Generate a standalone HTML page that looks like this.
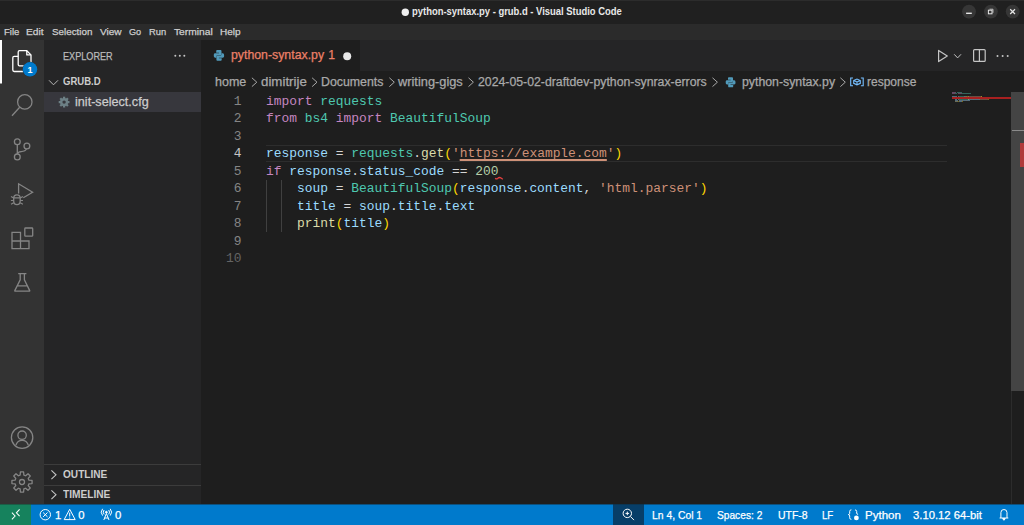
<!DOCTYPE html>
<html><head><meta charset="utf-8">
<style>
*{margin:0;padding:0;box-sizing:border-box}
html,body{width:1024px;height:525px;overflow:hidden;background:#1e1e1e;font-family:"Liberation Sans",sans-serif;position:relative}
.a{position:absolute}
.t{white-space:pre;transform-origin:0 50%;-webkit-text-stroke:0.25px currentColor}
.code{font-family:"Liberation Mono",monospace;font-size:12.917px;line-height:17.5px;white-space:pre;color:#d4d4d4}
#title{left:0;top:0;width:1024px;height:23.5px;background:#202020;border-top:1px solid #2c2c2c}
#menu{left:0;top:23.5px;width:1024px;height:16.5px;background:#2b2b2b}
#act{left:0;top:40px;width:44px;height:464px;background:#333333}
#side{left:44px;top:40px;width:157px;height:464px;background:#252526}
#tabs{left:201px;top:40px;width:823px;height:31px;background:#252526}
#tab{left:201px;top:40px;width:159px;height:31px;background:#1e1e1e}
#status{left:0;top:505px;width:1024px;height:20px;background:#007acc}
#statusb{left:0;top:504px;width:1024px;height:1px;background:rgba(0,122,204,.55)}
#remote{left:0;top:504px;width:31px;height:21px;background:#16825d;border-top:1px solid #1a5e46}
#zoomb{left:612.8px;top:504px;width:31px;height:21px;background:#073e68;border-top:1px solid #0b3552}
#sel{left:44px;top:92px;width:157px;height:20px;background:#37373d}
#curline{left:266px;top:144.5px;width:681px;height:17px;border-top:1.2px solid #2d2d2d;border-bottom:1.2px solid #2d2d2d}
.guide{width:1px;background:#404040}
svg{position:absolute;left:0;top:0}
</style></head><body>
<div id="title" class="a"></div>
<div id="menu" class="a"></div>
<div id="act" class="a"></div>
<div id="side" class="a"></div>
<div id="tabs" class="a"></div>
<div id="tab" class="a"></div>
<div id="sel" class="a"></div>
<div id="status" class="a"></div>
<div id="statusb" class="a"></div>
<div id="remote" class="a"></div>
<div id="zoomb" class="a"></div>
<div id="curline" class="a"></div>
<div class="a guide" style="left:266px;top:179.5px;height:52.5px"></div>
<div class="a guide" style="left:281px;top:179.5px;height:52.5px"></div>
<div class="a" style="left:44px;top:464px;width:157px;height:1px;background:#3c3c3c"></div>
<div class="a" style="left:44px;top:484.5px;width:157px;height:1px;background:#3c3c3c"></div>
<!-- scrollbar -->
<div class="a" style="left:1011px;top:92px;width:1px;height:412px;background:#2c2c2c"></div>
<div class="a" style="left:1011px;top:92px;width:13px;height:299px;background:#444444"></div>
<div class="a" style="left:1012px;top:129.5px;width:12px;height:1.5px;background:#8a8a8a"></div>
<div class="a" style="left:1020px;top:143px;width:4px;height:24px;background:#b03a3a"></div>
<!-- minimap -->
<div class="a" style="left:952.00px;top:92.00px;width:3.90px;height:1px;background:#c586c0;opacity:.42"></div>
<div class="a" style="left:956.55px;top:92.00px;width:5.20px;height:1px;background:#4ec9b0;opacity:.42"></div>
<div class="a" style="left:952.00px;top:93.34px;width:2.60px;height:1px;background:#c586c0;opacity:.42"></div>
<div class="a" style="left:955.25px;top:93.34px;width:1.95px;height:1px;background:#4ec9b0;opacity:.42"></div>
<div class="a" style="left:957.85px;top:93.34px;width:3.90px;height:1px;background:#c586c0;opacity:.42"></div>
<div class="a" style="left:962.40px;top:93.34px;width:8.45px;height:1px;background:#4ec9b0;opacity:.42"></div>
<div class="a" style="left:952.00px;top:96.02px;width:5.20px;height:1px;background:#9cdcfe;opacity:.42"></div>
<div class="a" style="left:957.85px;top:96.02px;width:0.65px;height:1px;background:#d4d4d4;opacity:.42"></div>
<div class="a" style="left:959.15px;top:96.02px;width:5.20px;height:1px;background:#4ec9b0;opacity:.42"></div>
<div class="a" style="left:964.35px;top:96.02px;width:0.65px;height:1px;background:#d4d4d4;opacity:.42"></div>
<div class="a" style="left:965.00px;top:96.02px;width:1.95px;height:1px;background:#dcdcaa;opacity:.42"></div>
<div class="a" style="left:966.95px;top:96.02px;width:0.65px;height:1px;background:#ffd700;opacity:.42"></div>
<div class="a" style="left:967.60px;top:96.02px;width:0.65px;height:1px;background:#ce9178;opacity:.42"></div>
<div class="a" style="left:968.25px;top:96.02px;width:12.35px;height:1px;background:#ce9178;opacity:.42"></div>
<div class="a" style="left:980.60px;top:96.02px;width:0.65px;height:1px;background:#ce9178;opacity:.42"></div>
<div class="a" style="left:981.25px;top:96.02px;width:0.65px;height:1px;background:#ffd700;opacity:.42"></div>
<div class="a" style="left:952.00px;top:97.36px;width:1.30px;height:1px;background:#c586c0;opacity:.42"></div>
<div class="a" style="left:953.95px;top:97.36px;width:5.20px;height:1px;background:#9cdcfe;opacity:.42"></div>
<div class="a" style="left:959.15px;top:97.36px;width:0.65px;height:1px;background:#d4d4d4;opacity:.42"></div>
<div class="a" style="left:959.80px;top:97.36px;width:7.15px;height:1px;background:#9cdcfe;opacity:.42"></div>
<div class="a" style="left:967.60px;top:97.36px;width:1.30px;height:1px;background:#d4d4d4;opacity:.42"></div>
<div class="a" style="left:969.55px;top:97.36px;width:1.95px;height:1px;background:#b5cea8;opacity:.42"></div>
<div class="a" style="left:954.60px;top:98.70px;width:2.60px;height:1px;background:#9cdcfe;opacity:.42"></div>
<div class="a" style="left:957.85px;top:98.70px;width:0.65px;height:1px;background:#d4d4d4;opacity:.42"></div>
<div class="a" style="left:959.15px;top:98.70px;width:8.45px;height:1px;background:#4ec9b0;opacity:.42"></div>
<div class="a" style="left:967.60px;top:98.70px;width:0.65px;height:1px;background:#ffd700;opacity:.42"></div>
<div class="a" style="left:968.25px;top:98.70px;width:5.20px;height:1px;background:#9cdcfe;opacity:.42"></div>
<div class="a" style="left:973.45px;top:98.70px;width:0.65px;height:1px;background:#d4d4d4;opacity:.42"></div>
<div class="a" style="left:974.10px;top:98.70px;width:4.55px;height:1px;background:#9cdcfe;opacity:.42"></div>
<div class="a" style="left:978.65px;top:98.70px;width:0.65px;height:1px;background:#d4d4d4;opacity:.42"></div>
<div class="a" style="left:979.95px;top:98.70px;width:8.45px;height:1px;background:#ce9178;opacity:.42"></div>
<div class="a" style="left:988.40px;top:98.70px;width:0.65px;height:1px;background:#ffd700;opacity:.42"></div>
<div class="a" style="left:954.60px;top:100.04px;width:3.25px;height:1px;background:#9cdcfe;opacity:.42"></div>
<div class="a" style="left:958.50px;top:100.04px;width:0.65px;height:1px;background:#d4d4d4;opacity:.42"></div>
<div class="a" style="left:959.80px;top:100.04px;width:2.60px;height:1px;background:#9cdcfe;opacity:.42"></div>
<div class="a" style="left:962.40px;top:100.04px;width:0.65px;height:1px;background:#d4d4d4;opacity:.42"></div>
<div class="a" style="left:963.05px;top:100.04px;width:3.25px;height:1px;background:#9cdcfe;opacity:.42"></div>
<div class="a" style="left:966.30px;top:100.04px;width:0.65px;height:1px;background:#d4d4d4;opacity:.42"></div>
<div class="a" style="left:966.95px;top:100.04px;width:2.60px;height:1px;background:#9cdcfe;opacity:.42"></div>
<div class="a" style="left:954.60px;top:101.38px;width:3.25px;height:1px;background:#dcdcaa;opacity:.42"></div>
<div class="a" style="left:957.85px;top:101.38px;width:0.65px;height:1px;background:#ffd700;opacity:.42"></div>
<div class="a" style="left:958.50px;top:101.38px;width:3.25px;height:1px;background:#9cdcfe;opacity:.42"></div>
<div class="a" style="left:961.75px;top:101.38px;width:0.65px;height:1px;background:#ffd700;opacity:.42"></div>
<div class="a" style="left:952px;top:96.9px;width:59px;height:2px;background:#a82020"></div>
<div class="a t" style="left:411.92px;top:6.84px;font-size:10px;line-height:10px;font-weight:700;color:#e8e8e8;transform:scaleX(0.9423);-webkit-text-stroke:0">python-syntax.py - grub.d - Visual Studio Code</div>
<div class="a t" style="left:3.82px;top:26.87px;font-size:9.6px;line-height:9.6px;font-weight:400;color:#cfcfcf;transform:scaleX(0.9937)">File</div>
<div class="a t" style="left:26.49px;top:26.87px;font-size:9.6px;line-height:9.6px;font-weight:400;color:#cfcfcf;transform:scaleX(1.0647)">Edit</div>
<div class="a t" style="left:51.61px;top:26.87px;font-size:9.6px;line-height:9.6px;font-weight:400;color:#cfcfcf;transform:scaleX(1.0227)">Selection</div>
<div class="a t" style="left:99.60px;top:26.87px;font-size:9.6px;line-height:9.6px;font-weight:400;color:#cfcfcf;transform:scaleX(1.0469)">View</div>
<div class="a t" style="left:129.04px;top:26.87px;font-size:9.6px;line-height:9.6px;font-weight:400;color:#cfcfcf;transform:scaleX(0.9484)">Go</div>
<div class="a t" style="left:149.03px;top:26.87px;font-size:9.6px;line-height:9.6px;font-weight:400;color:#cfcfcf;transform:scaleX(0.9744)">Run</div>
<div class="a t" style="left:173.89px;top:26.87px;font-size:9.6px;line-height:9.6px;font-weight:400;color:#cfcfcf;transform:scaleX(1.0672)">Terminal</div>
<div class="a t" style="left:219.80px;top:26.87px;font-size:9.6px;line-height:9.6px;font-weight:400;color:#cfcfcf;transform:scaleX(1.0434)">Help</div>
<div class="a t" style="left:62.74px;top:51.09px;font-size:11px;line-height:11px;font-weight:400;color:#bbbbbb;transform:scaleX(0.8287)">EXPLORER</div>
<div class="a t" style="left:62.72px;top:75.86px;font-size:10.8px;line-height:10.8px;font-weight:700;color:#cccccc;transform:scaleX(0.8844);-webkit-text-stroke:0">GRUB.D</div>
<div class="a t" style="left:75.09px;top:95.60px;font-size:12.4px;line-height:12.4px;font-weight:400;color:#cccccc;transform:scaleX(1.0193)">init-select.cfg</div>
<div class="a t" style="left:230.71px;top:49.27px;font-size:12.2px;line-height:12.2px;font-weight:400;color:#ec8068;transform:scaleX(1.0099)">python-syntax.py</div>
<div class="a t" style="left:328.31px;top:49.27px;font-size:12.2px;line-height:12.2px;font-weight:400;color:#ec8068;transform:scaleX(1.0000)">1</div>
<div class="a t" style="left:215.10px;top:75.54px;font-size:12px;line-height:12px;font-weight:400;color:#a9a9a9;transform:scaleX(1.0410)">home</div>
<div class="a t" style="left:260.97px;top:75.54px;font-size:12px;line-height:12px;font-weight:400;color:#a9a9a9;transform:scaleX(1.1079)">dimitrije</div>
<div class="a t" style="left:321.21px;top:75.54px;font-size:12px;line-height:12px;font-weight:400;color:#a9a9a9;transform:scaleX(1.0288)">Documents</div>
<div class="a t" style="left:398.19px;top:75.54px;font-size:12px;line-height:12px;font-weight:400;color:#a9a9a9;transform:scaleX(1.0673)">writing-gigs</div>
<div class="a t" style="left:477.81px;top:75.54px;font-size:12px;line-height:12px;font-weight:400;color:#a9a9a9;transform:scaleX(1.0237)">2024-05-02-draftdev-python-synrax-errors</div>
<div class="a t" style="left:741.81px;top:75.54px;font-size:12px;line-height:12px;font-weight:400;color:#a9a9a9;transform:scaleX(1.0256)">python-syntax.py</div>
<div class="a t" style="left:867.32px;top:75.54px;font-size:12px;line-height:12px;font-weight:400;color:#a9a9a9;transform:scaleX(0.9990)">response</div>
<div class="a t" style="left:62.60px;top:469.06px;font-size:10.8px;line-height:10.8px;font-weight:700;color:#cccccc;transform:scaleX(0.9347);-webkit-text-stroke:0">OUTLINE</div>
<div class="a t" style="left:62.59px;top:489.26px;font-size:10.8px;line-height:10.8px;font-weight:700;color:#cccccc;transform:scaleX(0.9387);-webkit-text-stroke:0">TIMELINE</div>
<div class="a t" style="left:54.95px;top:509.73px;font-size:11.3px;line-height:11.3px;font-weight:400;color:#ffffff;transform:scaleX(1.0000)">1</div>
<div class="a t" style="left:78.25px;top:509.73px;font-size:11.3px;line-height:11.3px;font-weight:400;color:#ffffff;transform:scaleX(1.0000)">0</div>
<div class="a t" style="left:115.05px;top:509.73px;font-size:11.3px;line-height:11.3px;font-weight:400;color:#ffffff;transform:scaleX(1.0000)">0</div>
<div class="a t" style="left:651.59px;top:509.73px;font-size:11.3px;line-height:11.3px;font-weight:400;color:#ffffff;transform:scaleX(0.9171)">Ln 4, Col 1</div>
<div class="a t" style="left:717.29px;top:509.73px;font-size:11.3px;line-height:11.3px;font-weight:400;color:#ffffff;transform:scaleX(0.9016)">Spaces: 2</div>
<div class="a t" style="left:777.58px;top:509.73px;font-size:11.3px;line-height:11.3px;font-weight:400;color:#ffffff;transform:scaleX(0.9254)">UTF-8</div>
<div class="a t" style="left:822.01px;top:509.73px;font-size:11.3px;line-height:11.3px;font-weight:400;color:#ffffff;transform:scaleX(0.8554)">LF</div>
<div class="a t" style="left:864.54px;top:509.73px;font-size:11.3px;line-height:11.3px;font-weight:400;color:#ffffff;transform:scaleX(1.0202)">Python</div>
<div class="a t" style="left:913.45px;top:509.73px;font-size:11.3px;line-height:11.3px;font-weight:400;color:#ffffff;transform:scaleX(0.9981)">3.10.12 64-bit</div>
<div class="a code" style="left:233.75px;top:92.9px;color:#858585">1</div>
<div class="a code" style="left:266px;top:92.9px"><span style="color:#c586c0">import</span><span style="color:#d4d4d4"> </span><span style="color:#4ec9b0">requests</span></div>
<div class="a code" style="left:233.75px;top:110.4px;color:#858585">2</div>
<div class="a code" style="left:266px;top:110.4px"><span style="color:#c586c0">from</span><span style="color:#d4d4d4"> </span><span style="color:#4ec9b0">bs4</span><span style="color:#d4d4d4"> </span><span style="color:#c586c0">import</span><span style="color:#d4d4d4"> </span><span style="color:#4ec9b0">BeautifulSoup</span></div>
<div class="a code" style="left:233.75px;top:127.9px;color:#858585">3</div>
<div class="a code" style="left:233.75px;top:145.4px;color:#c6c6c6">4</div>
<div class="a code" style="left:266px;top:145.4px"><span style="color:#9cdcfe">response</span><span style="color:#d4d4d4"> = </span><span style="color:#4ec9b0">requests</span><span style="color:#d4d4d4">.</span><span style="color:#dcdcaa">get</span><span style="color:#ffd700">(</span><span style="color:#ce9178">'</span><span style="color:#ce9178;text-decoration:underline;text-decoration-thickness:1.6px;text-underline-offset:1.9px">https://example.com</span><span style="color:#ce9178">'</span><span style="color:#ffd700">)</span></div>
<div class="a code" style="left:233.75px;top:162.9px;color:#858585">5</div>
<div class="a code" style="left:266px;top:162.9px"><span style="color:#c586c0">if</span><span style="color:#d4d4d4"> </span><span style="color:#9cdcfe">response</span><span style="color:#d4d4d4">.</span><span style="color:#9cdcfe">status_code</span><span style="color:#d4d4d4"> == </span><span style="color:#b5cea8">200</span></div>
<div class="a code" style="left:233.75px;top:180.4px;color:#858585">6</div>
<div class="a code" style="left:266px;top:180.4px"><span style="color:#d4d4d4">    </span><span style="color:#9cdcfe">soup</span><span style="color:#d4d4d4"> = </span><span style="color:#4ec9b0">BeautifulSoup</span><span style="color:#ffd700">(</span><span style="color:#9cdcfe">response</span><span style="color:#d4d4d4">.</span><span style="color:#9cdcfe">content</span><span style="color:#d4d4d4">, </span><span style="color:#ce9178">'html.parser'</span><span style="color:#ffd700">)</span></div>
<div class="a code" style="left:233.75px;top:197.9px;color:#858585">7</div>
<div class="a code" style="left:266px;top:197.9px"><span style="color:#d4d4d4">    </span><span style="color:#9cdcfe">title</span><span style="color:#d4d4d4"> = </span><span style="color:#9cdcfe">soup</span><span style="color:#d4d4d4">.</span><span style="color:#9cdcfe">title</span><span style="color:#d4d4d4">.</span><span style="color:#9cdcfe">text</span></div>
<div class="a code" style="left:233.75px;top:215.4px;color:#858585">8</div>
<div class="a code" style="left:266px;top:215.4px"><span style="color:#d4d4d4">    </span><span style="color:#dcdcaa">print</span><span style="color:#ffd700">(</span><span style="color:#9cdcfe">title</span><span style="color:#ffd700">)</span></div>
<div class="a code" style="left:233.75px;top:232.9px;color:#858585">9</div>
<div class="a code" style="left:226.00px;top:250.4px;color:#646464">10</div>
<svg width="1024" height="525" viewBox="0 0 1024 525">
<!-- title dot -->
<circle cx="405.3" cy="12.3" r="3.7" fill="#f0f0f0"/>
<!-- window buttons -->
<circle cx="969" cy="11.6" r="6.9" fill="#363636"/>
<circle cx="990.9" cy="11.6" r="6.9" fill="#363636"/>
<circle cx="1012.7" cy="11.6" r="6.9" fill="#363636"/>
<rect x="966.1" y="12.6" width="5.7" height="1.4" fill="#e6e6e6"/>
<rect x="988.4" y="10.2" width="3.6" height="3.6" fill="none" stroke="#e6e6e6" stroke-width="1"/>
<path d="M989.5 9.2 H993 V12.8" fill="none" stroke="#e6e6e6" stroke-width=".7"/>
<path d="M1010.2 9.3 L1015 14 M1015 9.3 L1010.2 14" stroke="#e6e6e6" stroke-width="1.2"/>
<!-- activity: explorer -->
<g fill="none" stroke="#ffffff" stroke-width="1.3" stroke-linejoin="round">
<path d="M18.2 56.3 H14.2 Q12.8 56.3 12.8 57.7 V70.1 Q12.8 71.5 14.2 71.5 H22.8 Q24.2 71.5 24.2 70.1 V66"/>
<path d="M18.2 52 Q18.2 50.7 19.5 50.7 H26.8 L31 54.9 V64.5 Q31 65.8 29.7 65.8 H19.5 Q18.2 65.8 18.2 64.5 Z"/>
<path d="M26.8 50.7 V54.9 H31"/>
</g>
<circle cx="30" cy="69.3" r="7.6" fill="#333333"/>
<circle cx="30" cy="69.3" r="7.2" fill="#007acc"/>
<text x="30" y="72.6" font-family="Liberation Sans" font-weight="700" font-size="9" fill="#fff" text-anchor="middle">1</text>
<rect x="0" y="40" width="2" height="43.5" fill="#ffffff"/>
<!-- search -->
<g fill="none" stroke="#858585" stroke-width="1.3">
<circle cx="24.8" cy="101.9" r="7.2"/>
<path d="M19.7 107.3 L12 115.8"/>
<!-- source control -->
<circle cx="17.3" cy="141.7" r="2.9"/>
<circle cx="17.3" cy="156.9" r="2.9"/>
<circle cx="26.9" cy="146" r="2.9"/>
<path d="M17.3 144.6 V154 M26.4 148.9 Q25.6 151.4 21.2 151.6 Q17.6 151.9 17.3 154"/>
<!-- run debug -->
<path d="M18.6 193.5 V183.8 L32.6 192.2 L23.3 197.8"/>
<path d="M13.7 198.2 V201 Q13.7 204.7 16.95 204.7 Q20.2 204.7 20.2 201 V198.2 Q20.2 194.8 16.95 194.8 Q13.7 194.8 13.7 198.2 Z M13.7 197.9 H20.2"/>
<path d="M11 196.4 L13.7 197.9 M10.9 200.5 H13.7 M11 204.3 L13.7 202.7 M22.9 196.4 L20.2 197.9 M23 200.5 H20.2 M22.9 204.3 L20.2 202.7" stroke-width="1.1"/>
<!-- extensions -->
<path d="M12 232.3 H20.5 V241 H29 V248.7 H12 Z M12 241 H20.5 V248.7"/>
<rect x="24.8" y="228" width="7.9" height="8.2" rx=".8"/>
<!-- testing -->
<path d="M18.2 273.6 H26.4 M20.2 273.6 V279.8 L14.8 290.6 Q14.6 291.1 15.2 291.1 H29.3 Q29.9 291.1 29.7 290.6 L24.4 279.8 V273.6 M17.3 285.8 H27.3"/>
<!-- account -->
<circle cx="22.1" cy="437.6" r="10.7"/>
<circle cx="22.1" cy="435.2" r="4.2"/>
<path d="M15.9 445 Q17.4 440.3 22.1 440.3 Q26.8 440.3 28.3 445"/>
</g>
<!-- gear -->
<g transform="translate(22 482)" fill="none" stroke="#858585" stroke-width="1.3" stroke-linejoin="round">
<path id="gear" d="M-1.86 -6.95 L-1.60 -10.07 L1.60 -10.07 L1.86 -6.95 L3.60 -6.24 L6.00 -8.25 L8.25 -6.00 L6.24 -3.60 L6.95 -1.86 L10.07 -1.60 L10.07 1.60 L6.95 1.86 L6.24 3.60 L8.25 6.00 L6.00 8.25 L3.60 6.24 L1.86 6.95 L1.60 10.07 L-1.60 10.07 L-1.86 6.95 L-3.60 6.24 L-6.00 8.25 L-8.25 6.00 L-6.24 3.60 L-6.95 1.86 L-10.07 1.60 L-10.07 -1.60 L-6.95 -1.86 L-6.24 -3.60 L-8.25 -6.00 L-6.00 -8.25 L-3.60 -6.24 Z"/>
<circle cx="0" cy="0" r="2.5"/>
</g>
<!-- sidebar -->
<g fill="#c5c5c5"><circle cx="175.3" cy="55.8" r="1"/><circle cx="179.8" cy="55.8" r="1"/><circle cx="184.3" cy="55.8" r="1"/></g>
<path d="M49 80.3 L53.5 84.8 L58 80.3" fill="none" stroke="#b8b8b8" stroke-width="1"/>
<path d="M51.4 470.4 L56 474.8 L51.4 479.2" fill="none" stroke="#c5c5c5" stroke-width="1.1"/>
<path d="M51.4 490.3 L56 494.7 L51.4 499.1" fill="none" stroke="#c5c5c5" stroke-width="1.1"/>
<!-- gear cfg icon -->
<g transform="translate(64.1 102.1)">
<circle r="4.2" fill="#6d8086"/>
<g fill="#6d8086"><rect x="-1.1" y="-5.4" width="2.2" height="10.8"/><rect x="-1.1" y="-5.4" width="2.2" height="10.8" transform="rotate(45)"/><rect x="-1.1" y="-5.4" width="2.2" height="10.8" transform="rotate(90)"/><rect x="-1.1" y="-5.4" width="2.2" height="10.8" transform="rotate(135)"/></g>
<circle r="1.7" fill="#37373d"/>
</g>
<!-- tab python icon -->
<g id="py" transform="translate(213.8 50.1)" fill="#519aba">
<path d="M3.6 0 H6.5 C7.3 0 7.7 0.5 7.7 1.3 V4.1 C7.7 4.8 7.2 5.2 6.5 5.2 H3.9 C3.1 5.2 2.6 5.7 2.6 6.5 V7.6 H1.4 C0.5 7.6 0 6.8 0 5.5 V4.8 C0 3.7 0.5 3.1 1.4 3.1 H5.2 V2.6 H2.4 V1.3 C2.4 0.5 2.8 0 3.6 0 Z"/>
<path transform="rotate(180 5.15 5.35)" d="M3.6 0 H6.5 C7.3 0 7.7 0.5 7.7 1.3 V4.1 C7.7 4.8 7.2 5.2 6.5 5.2 H3.9 C3.1 5.2 2.6 5.7 2.6 6.5 V7.6 H1.4 C0.5 7.6 0 6.8 0 5.5 V4.8 C0 3.7 0.5 3.1 1.4 3.1 H5.2 V2.6 H2.4 V1.3 C2.4 0.5 2.8 0 3.6 0 Z"/>
</g>
<circle cx="347.2" cy="56.2" r="4" fill="#e8e8e8"/>
<!-- breadcrumb chevrons -->
<g fill="none" stroke="#a9a9a9" stroke-width="1">
<path d="M251.9 77.8 L256.8 82.2 L251.9 86.6"/>
<path d="M312.1 77.8 L317 82.2 L312.1 86.6"/>
<path d="M389.4 77.8 L394.3 82.2 L389.4 86.6"/>
<path d="M458.9 77.8 L463.8 82.2 L458.9 86.6" transform="translate(9.6 0)"/>
<path d="M712.5 77.8 L717.4 82.2 L712.5 86.6"/>
<path d="M840.4 77.8 L845.3 82.2 L840.4 86.6"/>
</g>
<use href="#py" transform="translate(522.6 29.6) scale(0.95)"/>
<!-- symbol variable icon -->
<g fill="none" stroke="#75beff" stroke-width="1.1">
<path d="M853 78 H850.7 V85.8 H853 M860.9 78 H863.2 V85.8 H860.9"/>
<path d="M853.7 80.5 L857 79.1 L860.3 80.5 V83.3 L857 84.8 L853.7 83.3 Z M853.7 80.5 L857 82 L860.3 80.5 M857 82 V84.8"/>
</g>
<!-- editor actions -->
<g fill="none" stroke="#c5c5c5" stroke-width="1.2" stroke-linejoin="round">
<path d="M938.6 50.4 L947.3 56 L938.6 61.6 Z"/>
<path d="M954.2 54.3 L957.6 57.9 L961 54.3" stroke-width="1"/>
<rect x="973.6" y="49.6" width="11.6" height="11.8" rx="1"/>
<path d="M979.4 49.6 V61.4"/>
</g>
<g fill="#c5c5c5"><circle cx="997.5" cy="56" r="1"/><circle cx="1002.6" cy="56" r="1"/><circle cx="1007.7" cy="56" r="1"/></g>
<!-- squiggle -->
<path d="M495.2 178.2 Q496.4 179.4 497.6 178.4 Q499.4 176.8 501 178 L502.8 179.3" fill="none" stroke="#e8403f" stroke-width="1.25"/>
<!-- status bar icons -->
<g fill="none" stroke="#ffffff" stroke-width="1">
<path d="M11.9 512.6 L15.1 516 L11.9 519.4 M19.6 509.4 L16.4 512.8 L19.6 516.2" stroke-width="1.05"/>
<circle cx="45.3" cy="514.7" r="5.2"/>
<path d="M43.1 512.5 L47.5 516.9 M47.5 512.5 L43.1 516.9"/>
<path d="M69.7 509.3 L75.2 519.6 H64.2 Z"/>
<path d="M69.7 512.6 V516.5 M69.7 517.6 V518.6"/>
<path d="M104.1 510 Q102.3 512.2 104.1 514.4 M108.7 510 Q110.5 512.2 108.7 514.4 M102.6 508.8 Q99.7 512.2 102.6 515.6 M110.2 508.8 Q113.1 512.2 110.2 515.6"/>
<path d="M106.4 513.5 L103.8 520 M106.4 513.5 L109 520 M104.6 518 H108.2"/>
<circle cx="106.4" cy="512.2" r=".9" fill="#fff"/>
<circle cx="627.3" cy="513.4" r="4.2"/>
<path d="M630.3 516.4 L634 520.1 M625.5 513.4 H629.1 M627.3 511.6 V515.2"/>
<path d="M851.4 509.8 Q849.7 509.8 849.7 511.4 V513.3 Q849.7 514.5 848.3 514.6 Q849.7 514.7 849.7 515.9 V517.8 Q849.7 519.4 851.4 519.4"/>
<path d="M999.6 518 H1008.3 M1000.9 518 V512.6 Q1000.9 509.5 1003.95 509.5 Q1007 509.5 1007 512.6 V518"/><path d="M1002.6 518.6 L1003.95 520.3 L1005.3 518.6 Z" fill="#fff"/>
</g>
<circle cx="856.4" cy="517.9" r="2.4" fill="#fff"/>
<path d="M855 509.9 Q856.7 509.9 856.7 511.5 V513.1 Q856.7 514.3 858.1 514.4" fill="none" stroke="#fff" stroke-width="1"/>
</svg>
</body></html>
